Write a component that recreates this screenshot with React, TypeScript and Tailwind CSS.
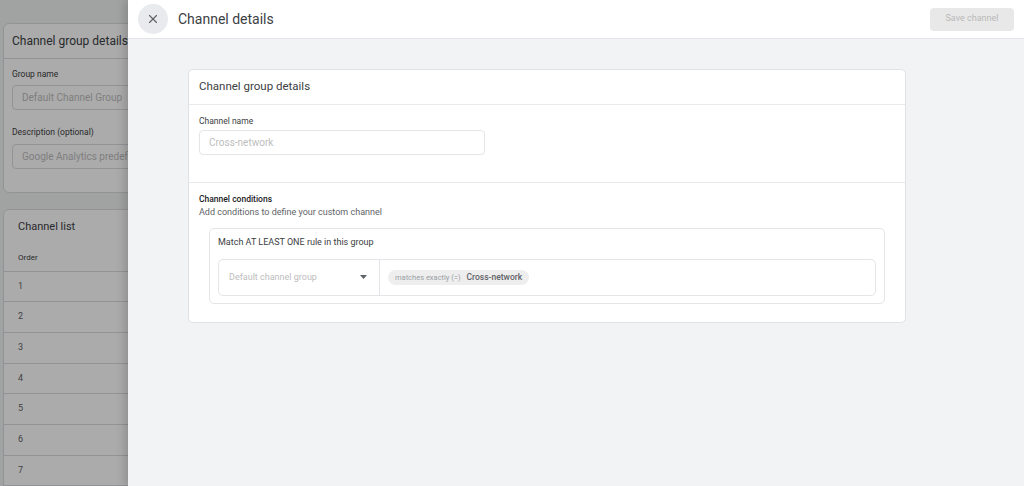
import { X } from "lucide-react";

const rows = [1, 2, 3, 4, 5, 6, 7];

function BackgroundPage() {
  return (
    <div className="flex h-full w-full flex-col gap-4 bg-[#f1f3f4] px-[3px] pt-[23px]">
      {/* Channel group details card */}
      <div className="h-[170px] w-[300px] shrink-0 rounded-md border border-[#dadce0] bg-white">
        <div className="flex h-[35px] items-center border-b border-[#dadce0] px-[8px] text-[12px] text-[#3c4043]">
          Channel group details
        </div>
        <div className="px-[8px] pt-[9px]">
          <p className="text-[8.5px] text-[#3c4043]">Group name</p>
          <div className="mt-[4px] flex h-[25px] w-[260px] items-center rounded border border-[#dadce0] px-[9px] text-[10px] text-[#bdbdbd]">
            Default Channel Group
          </div>
          <p className="mt-[16px] text-[8.5px] text-[#3c4043]">Description (optional)</p>
          <div className="mt-[5px] flex h-[25px] w-[260px] items-center rounded border border-[#dadce0] px-[9px] text-[10px] text-[#bdbdbd]">
            Google Analytics predefined channel group
          </div>
        </div>
      </div>

      {/* Channel list card */}
      <div className="w-[300px] flex-1 rounded-t-md border border-[#dadce0] bg-white">
        <div className="px-[14px] pt-[9px] text-[11px] text-[#3c4043]">Channel list</div>
        <div className="flex h-[36px] items-center border-b border-[#dadce0] px-[14px] pt-[10px] text-[8px] text-[#3c4043]">
          Order
        </div>
        {rows.map((n) => (
          <div
            key={n}
            className="flex h-[30.7px] items-center border-b border-[#dadce0] px-[14px] text-[9px] text-[#5f6368]"
          >
            {n}
          </div>
        ))}
      </div>
    </div>
  );
}

export default function App() {
  return (
    <div className="relative h-[486px] w-[1024px] overflow-hidden font-['Roboto',sans-serif]">
      <BackgroundPage />

      {/* Scrim */}
      <div className="absolute inset-0 bg-black/[0.33]" />

      {/* Side sheet */}
      <div className="absolute bottom-0 left-[128px] right-0 top-0 flex flex-col bg-[#f1f3f4] shadow-[-4px_0_8px_rgba(0,0,0,0.15)]">
        {/* Header */}
        <div className="flex h-[39px] shrink-0 items-center border-b border-[#e3e5e8] bg-white pl-[10px] pr-[10px]">
          <button
            type="button"
            className="flex size-[30px] items-center justify-center rounded-full bg-[#e8eaed] text-[#5f6368]"
          >
            <X className="size-[14px]" strokeWidth={2} />
          </button>
          <h1 className="ml-[10px] text-[14px] text-[#3c4043]">Channel details</h1>
          <button
            type="button"
            className="ml-auto h-[23px] w-[84px] rounded bg-[#e8e8e8] text-[9px] text-[#b8b8b8]"
          >
            Save channel
          </button>
        </div>

        {/* Body */}
        <div className="flex-1 pl-[60px] pt-[30px]">
          <div className="w-[718px] rounded-[5px] border border-[#e0e2e5] bg-white">
            <div className="flex h-[35px] items-center border-b border-[#e8eaed] px-[10px] text-[11.5px] text-[#3c4043]">
              Channel group details
            </div>

            <div className="h-[78px] border-b border-[#e8eaed] px-[10px] pt-[10px]">
              <p className="text-[8.5px] text-[#3c4043]">Channel name</p>
              <div className="mt-[2px] flex h-[25px] w-[286px] items-center rounded border border-[#e3e5e8] px-[9px] text-[10px] text-[#bdbdbd]">
                Cross-network
              </div>
            </div>

            <div className="px-[10px] pb-[18px] pt-[10px]">
              <p className="text-[8.5px] font-medium text-[#202124]">Channel conditions</p>
              <p className="text-[9px] text-[#5f6368]">Add conditions to define your custom channel</p>

              <div className="ml-[10px] mr-[10px] mt-[9px] rounded-[5px] border border-[#e3e5e8] px-[8px] pb-[7px] pt-[7px]">
                <p className="text-[9px] text-[#3c4043]">Match AT LEAST ONE rule in this group</p>
                <div className="mt-[9px] flex h-[37px] rounded-[5px] border border-[#e3e5e8]">
                  <div className="flex w-[161px] items-center justify-between border-r border-[#e3e5e8] pl-[10px] pr-[12px]">
                    <span className="text-[9px] text-[#bdbdbd]">Default channel group</span>
                    <svg width="7" height="4" viewBox="0 0 7 4" className="fill-[#5f6368]">
                      <path d="M0 0h7L3.5 4z" />
                    </svg>
                  </div>
                  <div className="flex items-center pl-[8px]">
                    <span className="flex h-[15px] items-center gap-[6px] rounded-full bg-[#eeeeee] px-[7px]">
                      <span className="text-[7.5px] text-[#9aa0a6]">matches exactly (=)</span>
                      <span className="text-[8.5px] font-medium text-[#5f6368]">Cross-network</span>
                    </span>
                  </div>
                </div>
              </div>
            </div>
          </div>
        </div>
      </div>
    </div>
  );
}
